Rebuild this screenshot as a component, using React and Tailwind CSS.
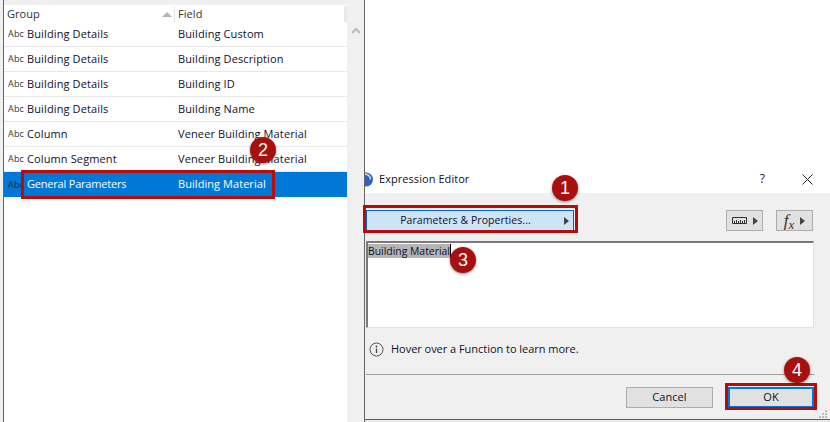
const font = { fontFamily: '"Open Sans", "Noto Sans", sans-serif' };

const rows = [
  ["Building Details", "Building Custom"],
  ["Building Details", "Building Description"],
  ["Building Details", "Building ID"],
  ["Building Details", "Building Name"],
  ["Column", "Veneer Building Material"],
  ["Column Segment", "Veneer Building Material"],
  ["General Parameters", "Building Material"],
];

function Row({ group, field, selected }) {
  return (
    <div className={`flex items-center h-[25px] shrink-0 ${selected ? "bg-[#0078d7] text-white" : "border-b border-[#e8e8e8]"}`}>
      <span className={`w-[23px] pl-[4px] text-[9px] tracking-[0.2px] ${selected ? "text-[#222]" : "text-[#333]"}`}>Abc</span>
      <span className={`w-[151px] ${selected ? "tracking-[-0.2px]" : "tracking-[0.12px]"}`}>{group}</span>
      <span className={selected ? "" : "tracking-[0.12px]"}>{field}</span>
    </div>
  );
}

function Marker({ n, className }) {
  return (
    <div
      className={`absolute w-[26px] h-[26px] rounded-full bg-[#a80f0f] text-white text-[18px] tracking-normal flex items-center justify-center shadow-[0_1px_3px_rgba(0,0,0,0.45)] ${className}`}
      style={{ fontFamily: '"Liberation Sans", sans-serif' }}
    >
      {n}
    </div>
  );
}

function Arrow() {
  return <svg width="5" height="8" viewBox="0 0 5 8"><path d="M0 0L5 4L0 8Z" fill="#444" /></svg>;
}

export default function App() {
  return (
    <div className="relative flex w-[830px] h-[422px] overflow-hidden bg-[#f0f0f0] text-[11px] tracking-[0.06px] text-[#10102a]" style={font}>
      {/* left window */}
      <div className="w-[3px] shrink-0 bg-[#f0f0f0]" />
      <div className="w-[1px] shrink-0 bg-[#666]" />
      <div className="w-[343px] shrink-0 flex flex-col pt-[5px]">
        <div className="flex items-center h-[17px] shrink-0 bg-white pt-[1px]">
          <span className="w-[171px] pl-[3px] flex items-center justify-between pr-[2px] border-r border-[#e5e5e5] h-full text-[#333]">
            Group
            <svg width="10" height="5" viewBox="0 0 10 5"><path d="M0 5L5 0L10 5Z" fill="#b5b5b5" /></svg>
          </span>
          <span className="pl-[3px] text-[#333]">Field</span>
          <span className="ml-auto w-[3px] h-full bg-[#e8e8e8]" />
        </div>
        <div className="flex-1 bg-white flex flex-col">
          {rows.map((r, i) => (
            <Row key={i} group={r[0]} field={r[1]} selected={i === 6} />
          ))}
        </div>
      </div>
      <div className="w-[17px] shrink-0 flex justify-center pt-[28px]">
        <svg width="8" height="6" viewBox="0 0 8 6"><path d="M0 5L4 1L8 5" fill="none" stroke="#bdbdbd" strokeWidth="2" /></svg>
      </div>
      <div className="w-[1px] shrink-0 bg-[#666]" />

      {/* right window */}
      <div className="flex-1 flex flex-col bg-white">
        <div className="h-[167px] shrink-0" />
        <div className="h-[26px] shrink-0 flex items-center overflow-hidden pb-[2px]">
          <svg width="8" height="15" viewBox="0 0 8 15" className="shrink-0">
            <circle cx="1" cy="7.5" r="7" fill="#2f62c0" />
            <path d="M-1 2.5A5 5 0 0 1 5.5 7.5" fill="none" stroke="#cfe0f5" strokeWidth="1.5" />
          </svg>
          <span className="ml-[6px]">Expression Editor</span>
          <span className="ml-auto mr-[1px] text-[12px] text-[#222]">?</span>
          <svg className="ml-[36px] mr-[17px]" width="11" height="11" viewBox="0 0 11 11"><path d="M0.5 0.5L10.5 10.5M10.5 0.5L0.5 10.5" stroke="#222" strokeWidth="1" /></svg>
        </div>
        <div className="flex-1 flex flex-col bg-[#f0f0f0] pl-[1px]">
          <div className="h-[17px] shrink-0" />
          <div className="flex items-center h-[21px] shrink-0">
            <div className="w-[208px] h-full bg-[#cce4f7] border border-[#0a64ad] flex items-center justify-center relative">
              <span className="pr-[9px] text-[10.5px]">Parameters &amp; Properties...</span>
              <span className="absolute right-[4px] flex"><Arrow /></span>
            </div>
            <div className="ml-[152px] w-[37px] h-full border border-[#adadad] bg-[#e1e1e1] flex items-center justify-center gap-[6px]">
              <svg width="15" height="7" viewBox="0 0 15 7"><path d="M0.5 0.5H14.5V6.5H0.5ZM2.5 4V6M4.5 3V6M6.5 4V6M8.5 3V6M10.5 4V6M12.5 3V6" fill="none" stroke="#333" strokeWidth="1" /></svg>
              <Arrow />
            </div>
            <div className="ml-[13px] w-[37px] h-full border border-[#adadad] bg-[#e1e1e1] flex items-center justify-center gap-[6px]">
              <span className="text-[17px] italic leading-none text-[#333]" style={{ fontFamily: '"Liberation Serif", serif' }}>f<span className="text-[13px] relative top-[3px]">x</span></span>
              <Arrow />
            </div>
          </div>
          <div className="h-[10px] shrink-0" />
          <div className="w-[448px] h-[87px] shrink-0 bg-white border-t-2 border-l-2 border-t-[#7a7a7a] border-l-[#7a7a7a] border-r border-b border-r-[#e3e3e3] border-b-[#e3e3e3] pt-[1px]">
            <div className="flex items-start">
              <span className="bg-[#b5b5b5] leading-[14px] text-[10.4px] tracking-normal">Building Material</span>
              <span className="w-[1px] h-[14px] bg-black" />
            </div>
          </div>
          <div className="h-[47px] shrink-0 flex items-center pl-[3px] gap-[7px] w-[448px] border-b border-[#a0a0a0] pb-[3px]">
            <svg width="15" height="15" viewBox="0 0 15 15">
              <circle cx="7.5" cy="7.5" r="6.5" fill="none" stroke="#555" strokeWidth="1" />
              <path d="M7.5 6.5V11" stroke="#444" strokeWidth="1.3" />
              <circle cx="7.5" cy="4.5" r="0.9" fill="#444" />
            </svg>
            <span className="tracking-[-0.03px]">Hover over a Function to learn more.</span>
          </div>
          <div className="flex justify-end w-[448px] pt-[12px] gap-[15px] h-[44px] shrink-0">
            <div className="w-[87px] h-[21px] border border-[#adadad] bg-[#e1e1e1] flex items-center justify-center">Cancel</div>
            <div className="w-[86px] h-[21px] border-2 border-[#0078d7] bg-[#e1e1e1] flex items-center justify-center">OK</div>
          </div>
          <div className="h-[1px] bg-[#0078d7] -ml-[1px]" />
          <div className="flex-1 bg-[#e9e9e9] -ml-[1px]" />
        </div>
      </div>

      {/* annotation overlays */}
      <div className="absolute left-[21px] top-[170px] w-[254px] h-[29px] border-[3px] border-[#b80c0c]" />
      <div className="absolute left-[363px] top-[205px] w-[215px] h-[28px] border-[3px] border-[#b80c0c]" />
      <div className="absolute left-[725px] top-[383px] w-[92px] h-[27px] border-[3px] border-[#b80c0c]" />
      <Marker n="1" className="left-[552px] top-[175px]" />
      <Marker n="2" className="left-[250px] top-[137px]" />
      <Marker n="3" className="left-[450px] top-[247px]" />
      <Marker n="4" className="left-[784px] top-[357px]" />
      <svg className="absolute left-[819px] top-[410px]" width="9" height="9" viewBox="0 0 9 9">
        <path d="M6 0h2v2H6zM3 3h2v2H3zM6 3h2v2H6zM0 6h2v2H0zM3 6h2v2H3zM6 6h2v2H6z" fill="#bdbdbd" />
      </svg>
    </div>
  );
}
